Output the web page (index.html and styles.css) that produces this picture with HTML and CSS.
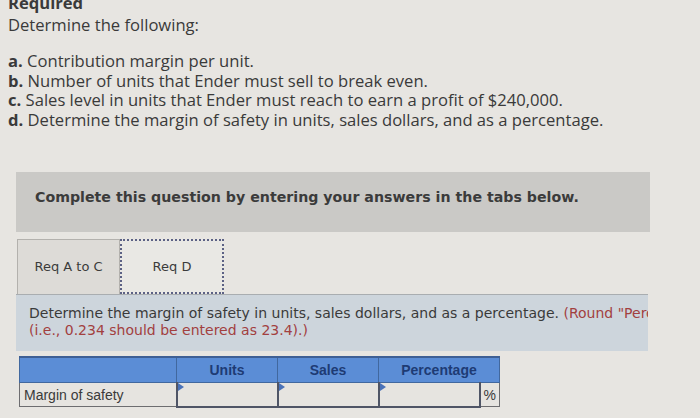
FILE: index.html
```html
<!DOCTYPE html>
<html>
<head>
<meta charset="utf-8">
<link rel="stylesheet" href="styles.css">
</head>
<body>
<div class="page">
  <h2 class="req">Required</h2>
  <p class="intro">Determine the following:</p>
  <ul class="list">
    <li><b>a.</b> Contribution margin per unit.</li>
    <li><b>b.</b> Number of units that Ender must sell to break even.</li>
    <li><b>c.</b> Sales level in units that Ender must reach to earn a profit of $240,000.</li>
    <li><b>d.</b> Determine the margin of safety in units, sales dollars, and as a percentage.</li>
  </ul>
  <div class="instr">Complete this question by entering your answers in the tabs below.</div>
  <div class="tabs">
    <div class="tab">Req A to C</div>
    <div class="tab active">Req D</div>
  </div>
  <div class="panel">
    <p class="ptext">Determine the margin of safety in units, sales dollars, and as a percentage. <span class="red">(Round "Percentage" answers to 1 decimal place</span></p>
    <p class="ptext red">(i.e., 0.234 should be entered as 23.4).)</p>
  </div>
  <table class="grid">
    <thead>
      <tr>
        <th class="c-label"></th>
        <th class="c-num">Units</th>
        <th class="c-num">Sales</th>
        <th class="c-pct" colspan="2">Percentage</th>
      </tr>
    </thead>
    <tbody>
      <tr>
        <td class="label">Margin of safety</td>
        <td class="inp"><span class="tri"></span></td>
        <td class="inp"><span class="tri"></span></td>
        <td class="inp"><span class="tri"></span></td>
        <td class="unit">%</td>
      </tr>
    </tbody>
  </table>
</div>
</body>
</html>
```

FILE: styles.css
```css
html, body {
  margin: 0;
  padding: 0;
}
body {
  width: 700px;
  height: 418px;
  overflow: hidden;
  background: #e7e5e1;
  font-family: "Open Sans", Lato, sans-serif;
  color: #3a3a3a;
}
.page {
  padding-left: 8px;
}
.req {
  margin: -7px 0 0 0;
  font-size: 16.6px;
  line-height: 20px;
  font-weight: 700;
}
.intro {
  margin: 2px 0 0 0;
  font-size: 16.6px;
  line-height: 20px;
}
.list {
  list-style: none;
  margin: 16px 0 0 0;
  padding: 0;
  font-size: 16.6px;
  line-height: 19.7px;
}
.list b {
  font-weight: 700;
}
.instr {
  margin: 42px 0 0 8px;
  width: 634px;
  height: 60px;
  box-sizing: border-box;
  padding: 16px 0 0 19px;
  background: #cac9c6;
  font-family: "DejaVu Sans", Verdana, sans-serif;
  font-weight: 700;
  font-size: 14.2px;
  line-height: 18px;
  color: #3b3b3b;
}
.tabs {
  display: flex;
  margin: 7px 0 0 9px;
  height: 55px;
}
.tab {
  width: 103px;
  box-sizing: border-box;
  display: flex;
  align-items: center;
  justify-content: center;
  background: #dddbd7;
  border: 1px solid #b3b1ad;
  border-bottom: none;
  font-family: "DejaVu Sans", Verdana, sans-serif;
  font-size: 13px;
  color: #3b3b3b;
}
.tab.active {
  width: 104px;
  background: #e9e8e4;
  border: 2px dotted #5c6184;
}
.panel {
  margin: 0 0 0 8px;
  width: 632px;
  height: 57px;
  box-sizing: border-box;
  overflow: hidden;
  padding: 10px 0 0 13px;
  background: #cdd5dc;
  border-top: 1px solid #a9adb0;
}
.ptext {
  margin: 0;
  white-space: nowrap;
  overflow: hidden;
  font-family: "DejaVu Sans", Verdana, sans-serif;
  font-size: 14px;
  line-height: 17px;
  color: #3a3a3a;
}
.red {
  color: #a2403f;
}
.grid {
  margin: 5px 0 0 11px;
  border-collapse: collapse;
  font-family: "Liberation Sans", Arial, sans-serif;
  font-size: 14px;
}
.grid th {
  background: #5b8dd6;
  color: #1e3b74;
  font-weight: 700;
  height: 26px;
  padding: 0;
  border: 1px solid #41689f;
  border-top: 2px solid #3e5f94;
  text-align: center;
  box-sizing: border-box;
}
.c-label { width: 157px; }
.c-num { width: 101px; }
.c-pct { width: 120px; }
.grid td {
  height: 24px;
  padding: 0;
  box-sizing: border-box;
  background: #e6e4e0;
}
.label {
  border: 1px solid #6d6d70;
  padding-left: 4px !important;
  color: #3a3a3a;
  width: 157px;
}
.inp {
  position: relative;
  border: 2px solid #4f5566;
  border-top: 1px solid #6d6d70;
  width: 101px;
}
.tri {
  position: absolute;
  left: 0;
  top: 0;
  width: 0;
  height: 0;
  border-top: 4px solid transparent;
  border-bottom: 4px solid transparent;
  border-left: 6px solid #4a72b8;
}
.unit {
  width: 20px;
  border: 1px solid #6d6d70;
  text-align: center;
  color: #3a3a3a;
}
```
